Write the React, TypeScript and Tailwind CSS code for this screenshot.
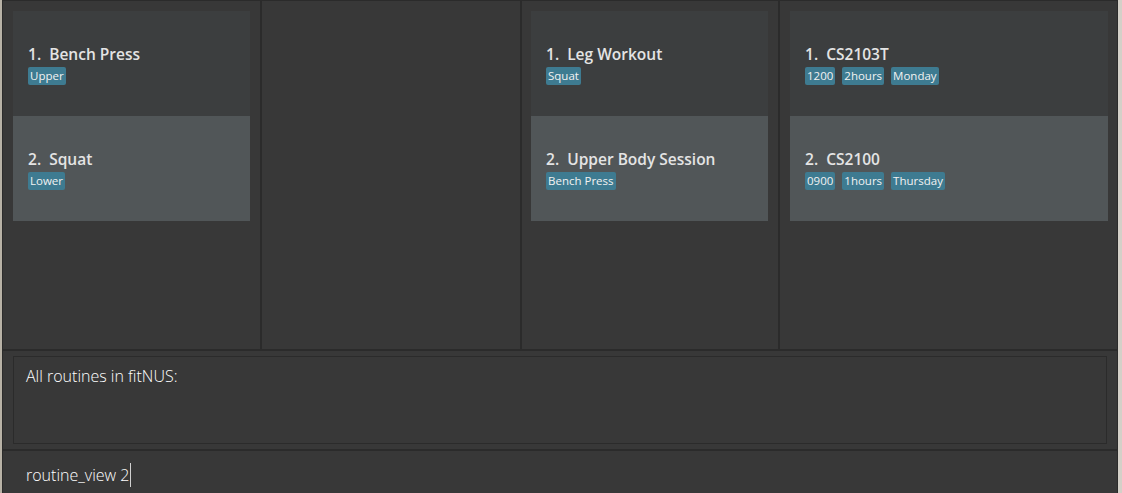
import React from "react";

type Item = { title: string; tags: string[] };

const col1: Item[] = [
  { title: "Bench Press", tags: ["Upper"] },
  { title: "Squat", tags: ["Lower"] },
];
const col3: Item[] = [
  { title: "Leg Workout", tags: ["Squat"] },
  { title: "Upper Body Session", tags: ["Bench Press"] },
];
const col4: Item[] = [
  { title: "CS2103T", tags: ["1200", "2hours", "Monday"] },
  { title: "CS2100", tags: ["0900", "1hours", "Thursday"] },
];

const font = { fontFamily: '"Open Sans", "Noto Sans", sans-serif' };

function Card({ item, index }: { item: Item; index: number }) {
  const bg = index % 2 === 0 ? "bg-[#3c3e3f]" : "bg-[#515658]";
  return (
    <div className={`h-[105px] ${bg} flex flex-col justify-center pl-[15px] pt-[2px]`}>
      <div className="text-[15.5px] font-semibold text-[#e4e4e4] leading-[20px] whitespace-pre">
        {index + 1}.  {item.title}
      </div>
      <div className="flex gap-[7px] mt-[3px]">
        {item.tags.map((t) => (
          <span
            key={t}
            className="bg-[#3e7b91] text-[#f2f2f2] text-[11.5px] leading-[18px] px-[2px] rounded-[2px]"
          >
            {t}
          </span>
        ))}
      </div>
    </div>
  );
}

function List({ items }: { items: Item[] }) {
  return (
    <div className="flex flex-col">
      {items.map((it, i) => (
        <Card key={it.title} item={it} index={i} />
      ))}
    </div>
  );
}

export default function App() {
  return (
    <div className="w-[1122px] h-[493px] bg-[#383838] flex overflow-hidden" style={font}>
      <div className="w-[2px] h-full bg-[#b8b2a6]" />
      <div className="flex-1 flex flex-col border-l border-r border-t border-[#2b2b2b]">
        <div className="h-[348px] flex">
          <div className="w-[257px] pt-[10px] px-[10px]">
            <List items={col1} />
          </div>
          <div className="w-[2px] bg-[#2b2b2b]" />
          <div className="w-[258px]" />
          <div className="w-[2px] bg-[#2b2b2b]" />
          <div className="w-[256px] pt-[10px] pl-[9px] pr-[10px]">
            <List items={col3} />
          </div>
          <div className="w-[2px] bg-[#2b2b2b]" />
          <div className="flex-1 pt-[10px] pl-[10px] pr-[9px]">
            <List items={col4} />
          </div>
        </div>
        <div className="h-[2px] bg-[#2b2b2b]" />
        <div className="h-[98px] px-[10px] py-[5px]">
          <div className="h-full border border-[#2b2b2b] pl-[12px] pt-[8px]">
            <div className="text-[16px] font-light text-white leading-[22px]">
              All routines in fitNUS:
            </div>
          </div>
        </div>
        <div className="h-[2px] bg-[#2b2b2b]" />
        <div className="flex-1 pl-[23px] pt-[12px]">
          <div className="flex items-center text-[16px] font-light text-white leading-[22px]">
            <span>routine_view 2</span>
            <span className="w-[1px] h-[24px] bg-[#d0d0d0] ml-[1px]" />
          </div>
        </div>
      </div>
      <div className="w-[4px] h-full bg-[#d4d0c8]" />
    </div>
  );
}
